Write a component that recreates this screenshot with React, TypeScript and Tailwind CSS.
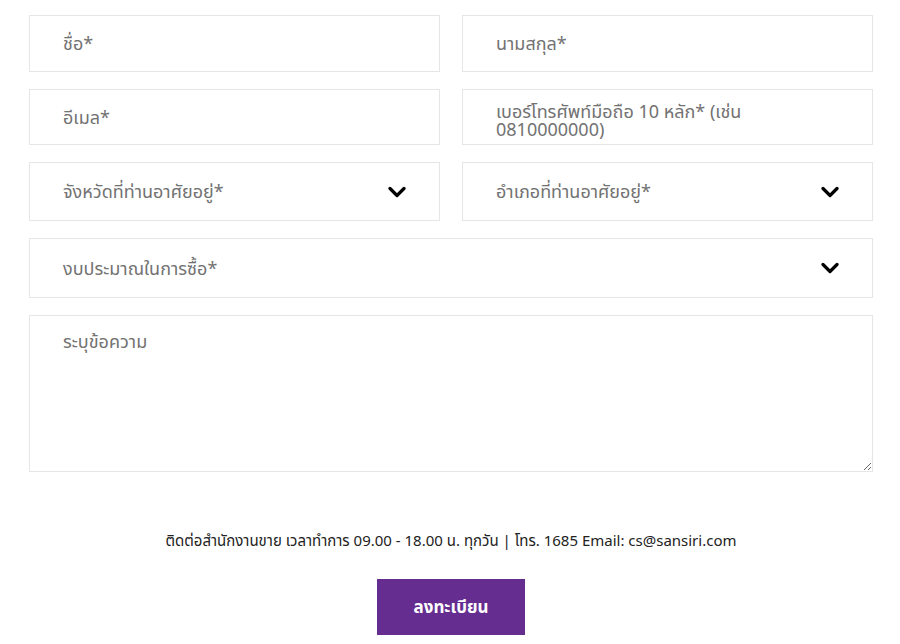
const font = { fontFamily: '"Noto Sans", "Noto Sans Thai", "Liberation Sans", sans-serif' };

const fieldBox = "border border-[#e6e6e6] bg-white text-[18px] text-[#727272]";

function Chevron() {
  return (
    <svg width="18" height="12" viewBox="0 0 18 12" className="shrink-0">
      <path d="M2 2.5 L9 9.5 L16 2.5" fill="none" stroke="#000" strokeWidth="3.2" strokeLinecap="round" strokeLinejoin="round" />
    </svg>
  );
}

function TextField({ label, className = "h-[57px]" }: { label: string; className?: string }) {
  return (
    <div className={`${fieldBox} flex items-center pl-[33px] ${className}`}>
      {label}
    </div>
  );
}

function SelectField({ label, className = "h-[59px]" }: { label: string; className?: string }) {
  return (
    <div
      className={`${fieldBox} flex items-center justify-between pl-[33px] pr-[33px] ${className}`}
    >
      <span>{label}</span>
      <Chevron />
    </div>
  );
}

export default function App() {
  return (
    <div className="min-h-[644px] w-[900px] bg-white" style={font}>
      <div className="flex flex-col gap-[17px] pl-[29px] pr-[27px] pt-[15px]">
        <div className="grid grid-cols-2 gap-x-[22px] gap-y-[17px]">
          <TextField label="ชื่อ*" />
          <TextField label="นามสกุล*" />
          <TextField label="อีเมล*" className="h-[56px]" />
          <div className={`${fieldBox} h-[56px] pl-[33px] pt-[12px] leading-[18px]`}>
            เบอร์โทรศัพท์มือถือ 10 หลัก* (เช่น
            <br />
            0810000000)
          </div>
          <SelectField label="จังหวัดที่ท่านอาศัยอยู่*" />
          <SelectField label="อำเภอที่ท่านอาศัยอยู่*" />
        </div>
        <SelectField label="งบประมาณในการซื้อ*" className="h-[60px]" />
        <textarea
          placeholder="ระบุข้อความ"
          className="h-[157px] w-full resize-y border border-[#e6e6e6] px-[33px] pt-[12px] text-[18px] text-[#727272] placeholder:text-[#727272] outline-none"
          style={font}
        />
      </div>
      <p className="mt-[57px] pl-[2px] text-center text-[15px] text-[#222]">
        ติดต่อสำนักงานขาย เวลาทำการ 09.00 - 18.00 น. ทุกวัน | โทร. 1685 Email: cs@sansiri.com
      </p>
      <div className="mt-[27px] flex justify-center pl-[2px]">
        <button className="h-[56px] w-[148px] bg-[#662d91] text-[17px] font-bold text-white">
          ลงทะเบียน
        </button>
      </div>
    </div>
  );
}
